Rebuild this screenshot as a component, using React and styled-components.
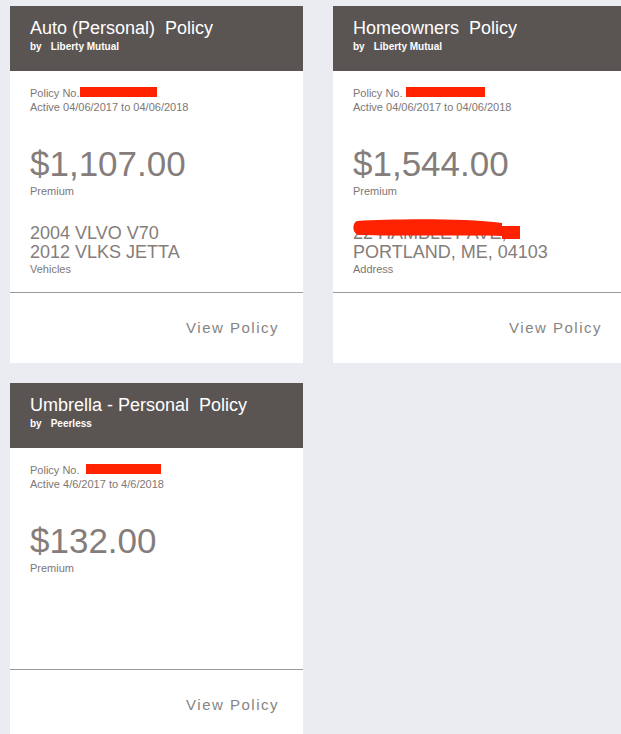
import styled, { createGlobalStyle } from "styled-components";

const GlobalStyle = createGlobalStyle`
  html, body {
    margin: 0;
    padding: 0;
    overflow: hidden;
    background: #ebecf1;
    font-family: "Liberation Sans", Arial, sans-serif;
  }
`;

const policies = [
  {
    title: "Auto (Personal)  Policy",
    carrier: "Liberty Mutual",
    redact: { gap: 0, width: 77 },
    active: "Active 04/06/2017 to 04/06/2018",
    premium: "$1,107.00",
    detail: { lines: ["2004 VLVO V70", "2012 VLKS JETTA"], label: "Vehicles" },
  },
  {
    title: "Homeowners  Policy",
    carrier: "Liberty Mutual",
    redact: { gap: 3, width: 79 },
    active: "Active 04/06/2017 to 04/06/2018",
    premium: "$1,544.00",
    detail: {
      lines: ["22 HAMBLET AVE,", "PORTLAND, ME, 04103"],
      label: "Address",
      scribble: true,
    },
  },
  {
    title: "Umbrella - Personal  Policy",
    carrier: "Peerless",
    redact: { gap: 6, width: 75 },
    active: "Active 4/6/2017 to 4/6/2018",
    premium: "$132.00",
  },
];

function Scribble() {
  return (
    <ScribbleSvg width="172" height="24" viewBox="0 0 172 24">
      <path
        d="M5 3 C40 1 110 0 150 5 L150 8 L168 8 L168 21 L150 21 L150 18 C110 17 45 18 6 17 C0 15 0 5 5 3 Z"
        fill="#ff2200"
      />
    </ScribbleSvg>
  );
}

function PolicyCard({ policy }) {
  return (
    <Card>
      <Header>
        <Title>{policy.title}</Title>
        <Carrier>
          by<CarrierName>{policy.carrier}</CarrierName>
        </Carrier>
      </Header>
      <Body>
        <Meta>
          Policy No.
          <Redaction $gap={policy.redact.gap} $width={policy.redact.width} />
          <br />
          {policy.active}
        </Meta>
        <Amount>{policy.premium}</Amount>
        <Label>Premium</Label>
        {policy.detail && (
          <Detail>
            {policy.detail.scribble && <Scribble />}
            {policy.detail.lines.map((l) => (
              <DetailLine key={l}>{l}</DetailLine>
            ))}
            <Label>{policy.detail.label}</Label>
          </Detail>
        )}
      </Body>
      <Footer>
        <ViewLink href="#">View Policy</ViewLink>
      </Footer>
    </Card>
  );
}

export default function App() {
  return (
    <>
      <GlobalStyle />
      <Grid>
        {policies.map((p) => (
          <PolicyCard key={p.title} policy={p} />
        ))}
      </Grid>
    </>
  );
}

const Grid = styled.div`
  display: grid;
  grid-template-columns: 293px 293px;
  column-gap: 30px;
  row-gap: 20px;
  padding: 6px 0 0 10px;
  width: 700px;
`;

const Card = styled.div`
  background: #ffffff;
  height: 357px;
  display: flex;
  flex-direction: column;
`;

const Header = styled.div`
  background: #5a5553;
  height: 65px;
  box-sizing: border-box;
  padding: 11px 20px 0;
  color: #ffffff;
`;

const Title = styled.div`
  font-size: 18px;
  line-height: 22px;
  white-space: pre;
`;

const Carrier = styled.div`
  margin-top: 1px;
  font-size: 10px;
  line-height: 14px;
  font-weight: bold;
`;

const CarrierName = styled.span`
  margin-left: 9px;
`;

const Body = styled.div`
  flex: 1;
  padding: 15px 20px 0;
  color: #857d7b;
`;

const Meta = styled.div`
  font-size: 11px;
  line-height: 14px;
  color: #7d7775;
`;

const Redaction = styled.span`
  display: inline-block;
  width: ${(p) => p.$width}px;
  height: 10px;
  margin-left: ${(p) => p.$gap}px;
  background: #ff2200;
  vertical-align: baseline;
`;

const Amount = styled.div`
  margin-top: 30px;
  font-size: 35px;
  line-height: 40px;
  color: #857d7b;
`;

const Label = styled.div`
  font-size: 11px;
  line-height: 14px;
  color: #7d7775;
`;

const Detail = styled.div`
  position: relative;
  margin-top: 26px;
`;

const DetailLine = styled.div`
  font-size: 18px;
  line-height: 19px;
  color: #857d7b;
`;

const ScribbleSvg = styled.svg`
  position: absolute;
  left: -1px;
  top: -6px;
`;

const Footer = styled.div`
  height: 71px;
  border-top: 1px solid #9a9a9a;
  display: flex;
  justify-content: flex-end;
  align-items: center;
  padding: 0 24px 2px 0;
  box-sizing: border-box;
`;

const ViewLink = styled.a`
  font-size: 15px;
  letter-spacing: 1.5px;
  color: #858585;
  text-decoration: none;
`;
